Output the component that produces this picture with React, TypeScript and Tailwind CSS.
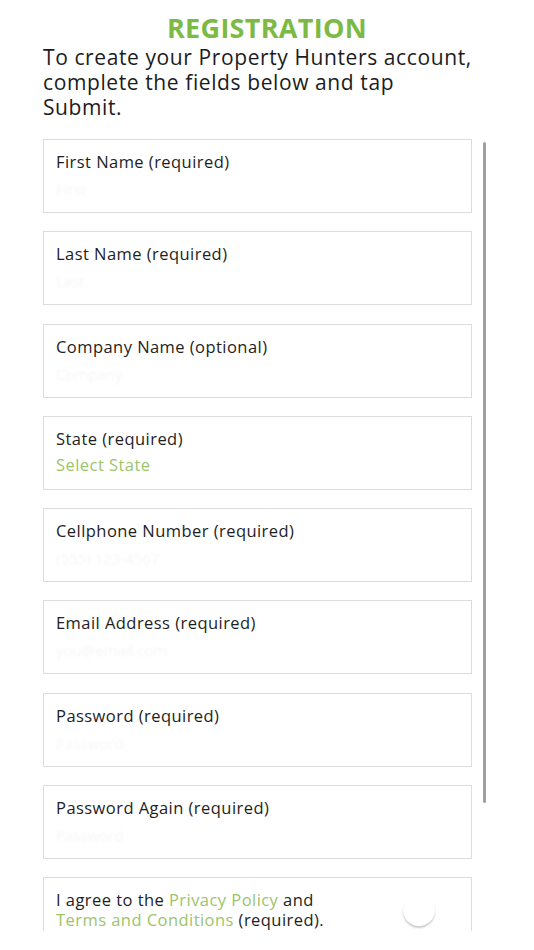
import React from "react";

const fields = [
  { label: "First Name (required)", hint: "First" },
  { label: "Last Name (required)", hint: "Last" },
  { label: "Company Name (optional)", hint: "Company" },
  { label: "State (required)", select: true },
  { label: "Cellphone Number (required)", hint: "(555) 123-4567" },
  { label: "Email Address (required)", hint: "you@email.com" },
  { label: "Password (required)", hint: "Password" },
  { label: "Password Again (required)", hint: "Password" },
];

const font = { fontFamily: '"Open Sans", "Liberation Sans", sans-serif' };

export default function App() {
  return (
    <div className="w-[534px] h-[950px] bg-white overflow-hidden text-[#222]" style={font}>
      {/* Header */}
      <div className="px-[43px] pt-[12px]">
        <h1 className="text-center font-bold text-[27px] leading-[32px] tracking-[0.3px] text-[#7cba45]">
          REGISTRATION
        </h1>
        <p className="text-[21px] leading-[25px] tracking-[0.6px] text-[#1c1c1c] mt-[1px] whitespace-nowrap">
          To create your Property Hunters account,
          <br />
          complete the fields below and tap
          <br />
          Submit.
        </p>
      </div>

      {/* Scrolling form */}
      <div className="relative mt-[18px] h-[793px] overflow-hidden">
        <div className="flex flex-col gap-[18.3px] pl-[43px] w-[472px] pt-[1px]">
          {fields.map((f) => (
            <div
              key={f.label}
              className="h-[74px] border border-[#dcdcdc] px-[12px] pt-[11px] flex flex-col"
            >
              <span className="text-[16.5px] leading-[22px] tracking-[0.45px] text-[#1e1e1e]">{f.label}</span>
              {f.select ? (
                <span className="text-[16.5px] leading-[22px] tracking-[0.45px] mt-[4px] text-[#9cc46b]">Select State</span>
              ) : (
                <span className="text-[15px] leading-[20px] mt-[6px] text-[#f6f6f6] blur-[1px]">{f.hint}</span>
              )}
            </div>
          ))}
          <div className="relative h-[80px] border border-[#dcdcdc] px-[12px] pt-[12px]">
            <p className="text-[16.5px] leading-[20px] tracking-[0.45px] text-[#1e1e1e]">
              I agree to the <span className="text-[#9cc46b]">Privacy Policy</span> and
              <br />
              <span className="text-[#9cc46b]">Terms and Conditions</span> (required).
            </p>
            <div className="absolute left-[359px] top-[16px] w-[32px] h-[32px] rounded-full bg-white shadow-[0_2px_2px_rgba(0,0,0,0.2)]" />
          </div>
        </div>
        {/* Scroll indicator */}
        <div className="absolute left-[483px] top-[4px] w-[3px] h-[661px] rounded-full bg-[#a0a0a0]" />
      </div>
    </div>
  );
}
